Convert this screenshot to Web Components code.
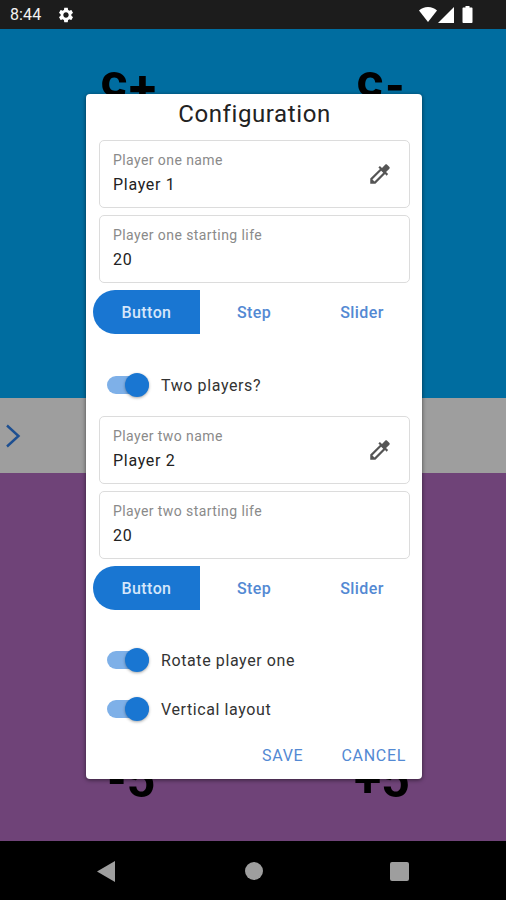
<!DOCTYPE html>
<html>
<head>
<meta charset="utf-8">
<title>Configuration</title>
<style>
  html, body { margin: 0; height: 100%; }
  body { font-family: Roboto, "Noto Sans", sans-serif; overflow: hidden; }
</style>
</head>
<body>
<life-app>
  <config-dialog slot="dialog"></config-dialog>
</life-app>

<script>
class statusBar extends HTMLElement {
  constructor() {
    super();
    this.attachShadow({ mode: "open" });
    this.shadowRoot.innerHTML = `
    <style>
      :host { display: flex; align-items: center; height: 29px; background: #1c1c1c; color: #f2f2f2; padding: 0 33px 0 10px; font-size: 16px; flex: none; }
      span { width: 47px; letter-spacing: .1px; }
      .right { margin-left: auto; display: flex; align-items: center; }
      svg { display: block; fill: #fff; }
    </style>
    <span>8:44</span>
    <svg width="18" height="18" viewBox="0 0 24 24"><path d="M19.14 12.94c.04-.3.06-.61.06-.94s-.02-.64-.07-.94l2.03-1.58c.18-.14.23-.41.12-.61l-1.92-3.32c-.12-.22-.37-.29-.59-.22l-2.39.96c-.5-.38-1.03-.7-1.62-.94l-.36-2.54c-.04-.24-.24-.41-.48-.41h-3.84c-.24 0-.43.17-.47.41l-.36 2.54c-.59.24-1.13.57-1.62.94l-2.39-.96c-.22-.08-.47 0-.59.22L2.74 8.87c-.12.21-.08.47.12.61l2.03 1.58c-.05.3-.09.63-.09.94s.02.64.07.94l-2.03 1.58c-.18.14-.23.41-.12.61l1.92 3.32c.12.22.37.29.59.22l2.39-.96c.5.38 1.03.7 1.62.94l.36 2.54c.05.24.24.41.48.41h3.84c.24 0 .44-.17.47-.41l.36-2.54c.59-.24 1.13-.56 1.62-.94l2.39.96c.22.08.47 0 .59-.22l1.92-3.32c.12-.22.07-.47-.12-.61l-2.01-1.58zM12 15.6c-1.98 0-3.6-1.62-3.6-3.6s1.62-3.6 3.6-3.6 3.6 1.62 3.6 3.6-1.62 3.6-3.6 3.6z"/></svg>
    <div class="right">
      <svg width="18" height="15" viewBox="0 0 18 15"><path d="M0 3.6C2.4 1.4 5.5 0 9 0s6.6 1.4 9 3.6L9 15z"/></svg>
      <svg width="16" height="16" viewBox="0 0 16 16" style="margin-left:1px"><path d="M16 0v16H0z"/></svg>
      <svg width="11" height="17" viewBox="0 0 11 17" style="margin-left:8px"><path d="M3.5 0h4v1.6h2c.6 0 1 .4 1 1V16c0 .6-.4 1-1 1h-8c-.6 0-1-.4-1-1V2.600c0-.6.4-1 1-1h2z"/></svg>
    </div>`;
  }
}
customElements.define('status-bar', statusBar);

class navBar extends HTMLElement {
  constructor() {
    super();
    this.attachShadow({ mode: "open" });
    this.shadowRoot.innerHTML = `
    <style>
      :host { display: flex; justify-content: space-between; align-items: center; height: 59px; box-sizing: border-box; padding: 1px 97px 0; background: #000; flex: none; }
      svg { display: block; fill: #9e9e9e; }
      .dot { width: 18px; height: 18px; border-radius: 50%; background: #9e9e9e; margin-left: 3px; }
      .sq { width: 19px; height: 19px; border-radius: 2px; background: #9e9e9e; }
    </style>
    <svg width="18" height="21" viewBox="0 0 18 21"><path d="M18 0v21L0 10.500z"/></svg>
    <div class="dot"></div>
    <div class="sq"></div>`;
  }
}
customElements.define('nav-bar', navBar);

class scorePanel extends HTMLElement {
  constructor() {
    super();
    this.attachShadow({ mode: "open" });
  }
  connectedCallback() {
    this.shadowRoot.innerHTML = `
    <style>
      :host { display: flex; height: var(--panel-h); flex: none; box-sizing: border-box; background: var(--panel); padding: var(--pad); align-items: var(--align); justify-content: space-between; color: #000; font: 700 50px/56px Roboto, sans-serif; }
      span { display: block; }
      :host([rotated]) span { transform: rotate(180deg); }
    </style>
    <span>${this.getAttribute('left')}</span>
    <span>${this.getAttribute('right')}</span>`;
  }
}
customElements.define('score-panel', scorePanel);

class lifeApp extends HTMLElement {
  constructor() {
    super();
    this.attachShadow({ mode: "open" });
    this.shadowRoot.innerHTML = `
    <style>
      :host { display: flex; flex-direction: column; width: 506px; height: 900px; position: relative; }
      .bar { height: 75px; background: #9e9e9e; display: flex; align-items: center; padding-left: 3px; flex: none; }
      .bar svg { display: block; }
      .blue { --panel-h: 369px; --panel: #006da0; --pad: 32px 102px 0 100px; --align: flex-start; }
      .purple { --panel-h: 368px; --panel: #6f4378; --pad: 0 96px 33px 107px; --align: flex-end; }
      .dialog { position: absolute; left: 86px; top: 94px; }
    </style>
    <status-bar></status-bar>
    <score-panel class="blue" rotated left="+5" right="-5"></score-panel>
    <div class="bar">
      <svg width="20" height="24" viewBox="0 0 20 24" fill="none" stroke="#1d4f91" stroke-width="2.400"><path d="M4 1.500L15.500 12 4 22.500"/></svg>
    </div>
    <score-panel class="purple" left="-5" right="+5"></score-panel>
    <nav-bar></nav-bar>
    <div class="dialog"><slot name="dialog"></slot></div>`;
  }
}
customElements.define('life-app', lifeApp);

class textField extends HTMLElement {
  constructor() {
    super();
    this.attachShadow({ mode: "open" });
  }
  connectedCallback() {
    const picker = this.hasAttribute('picker') ? `
      <svg width="26" height="26" viewBox="0 0 24 24" fill="#555"><path d="M20.71 5.630l-2.340-2.340c-.39-.39-1.020-.39-1.410 0l-3.120 3.120-1.930-1.910-1.410 1.410 1.420 1.420L3 16.250V21h4.750l8.920-8.920 1.420 1.420 1.410-1.410-1.920-1.920 3.120-3.120c.4-.4.4-1.030.01-1.420zM6.920 19L5 17.080l8.060-8.060 1.920 1.920L6.920 19z"/></svg>` : '';
    this.shadowRoot.innerHTML = `
    <style>
      :host { display: flex; align-items: center; height: 68px; box-sizing: border-box; border: 1px solid #dcdcdc; border-radius: 5px; padding: 0 16px 0 13px; background: #fff; }
      .txt { flex: 1; padding-top: 2px; }
      .label { font-size: 14px; line-height: 18px; color: #8a8a8a; letter-spacing: .42px; margin-top: -2px; }
      .value { font-size: 16px; line-height: 24px; color: #222; letter-spacing: .7px; margin-top: 4px; }
      svg { display: block; }
    </style>
    <div class="txt">
      <div class="label">${this.getAttribute('label')}</div>
      <div class="value">${this.getAttribute('value')}</div>
    </div>
    ${picker}`;
  }
}
customElements.define('text-field', textField);

class segButtons extends HTMLElement {
  constructor() {
    super();
    this.attachShadow({ mode: "open" });
    this.shadowRoot.innerHTML = `
    <style>
      :host { display: grid; grid-template-columns: 107px 108px 108px; height: 44px; margin-left: -6px; font-size: 16px; font-weight: 500; letter-spacing: .4px; }
      div { display: flex; align-items: center; justify-content: center; color: #5389d3; }
      .on { background: #1976d2; color: #d5e6fa; border-radius: 22px 0 0 22px; }
    </style>
    <div class="on">Button</div>
    <div>Step</div>
    <div>Slider</div>`;
  }
}
customElements.define('seg-buttons', segButtons);

class toggleRow extends HTMLElement {
  constructor() {
    super();
    this.attachShadow({ mode: "open" });
    this.shadowRoot.innerHTML = `
    <style>
      :host { display: flex; align-items: center; height: 26px; padding-left: 8px; font-size: 16px; color: #333; letter-spacing: .6px; }
      .track { width: 42px; height: 18px; border-radius: 9px; background: #7eb0e8; position: relative; margin-right: 12px; flex: none; }
      .knob { position: absolute; right: 0; top: -3px; width: 24px; height: 24px; border-radius: 50%; background: #1976d2; box-shadow: 0 1px 3px rgba(0,0,0,.35); }
    </style>
    <div class="track"><div class="knob"></div></div>
    <slot></slot>`;
  }
}
customElements.define('toggle-row', toggleRow);

class configDialog extends HTMLElement {
  constructor() {
    super();
    this.attachShadow({ mode: "open" });
    this.shadowRoot.innerHTML = `
    <style>
      :host { display: flex; flex-direction: column; width: 336px; height: 685px; box-sizing: border-box; background: #fff; border-radius: 4px; padding: 0 12px 0 13px; box-shadow: 0 1px 4px rgba(0,0,0,.55); }
      h2 { margin: 0; height: 46px; display: flex; align-items: center; justify-content: center; padding-bottom: 6px; box-sizing: border-box; font-size: 24px; line-height: 36px; font-weight: 400; color: #222; letter-spacing: .6px; }
      .group { display: flex; flex-direction: column; gap: 7px; }
      .sw1 { margin-top: 38px; }
      .group2 { margin-top: 18px; }
      .sw2 { margin-top: 37px; }
      .sw3 { margin-top: 23px; }
      .actions { display: flex; justify-content: flex-end; gap: 38px; margin-top: auto; padding: 0 4px 14px 0; font-size: 16px; color: #5389d3; letter-spacing: .7px; }
    </style>
    <h2>Configuration</h2>
    <div class="group">
      <text-field label="Player one name" value="Player 1" picker></text-field>
      <text-field label="Player one starting life" value="20"></text-field>
      <seg-buttons></seg-buttons>
    </div>
    <toggle-row class="sw1">Two players?</toggle-row>
    <div class="group group2">
      <text-field label="Player two name" value="Player 2" picker></text-field>
      <text-field label="Player two starting life" value="20"></text-field>
      <seg-buttons></seg-buttons>
    </div>
    <toggle-row class="sw2">Rotate player one</toggle-row>
    <toggle-row class="sw3">Vertical layout</toggle-row>
    <div class="actions"><span>SAVE</span><span>CANCEL</span></div>`;
  }
}
customElements.define('config-dialog', configDialog);
</script>
</body>
</html>
